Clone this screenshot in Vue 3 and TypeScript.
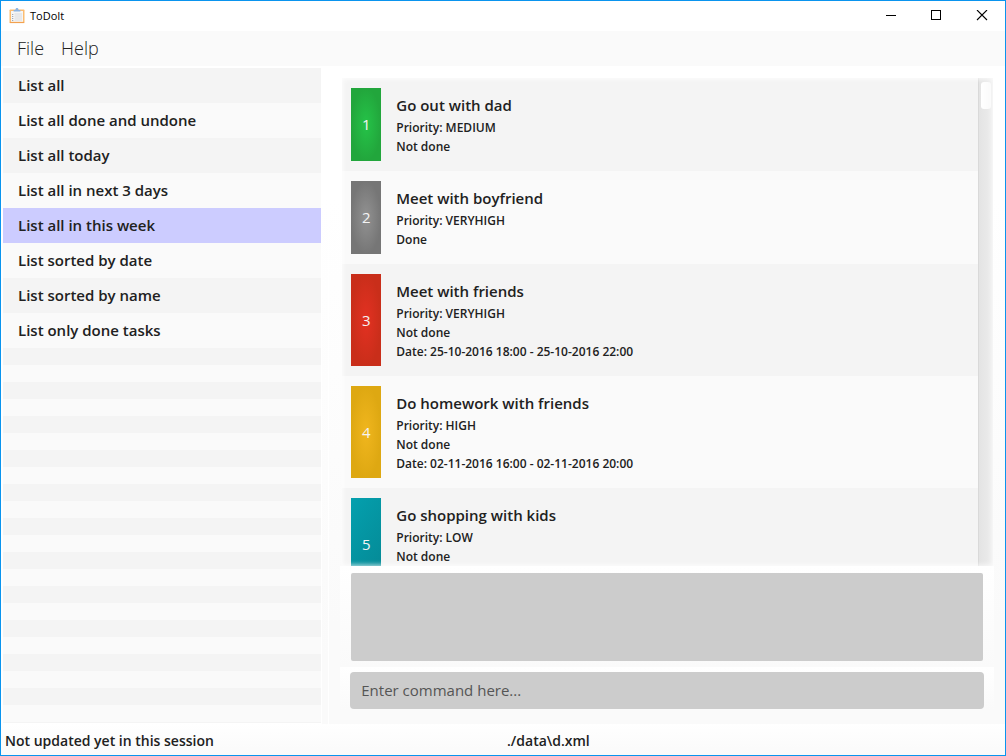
<script setup lang="ts">
import { ref } from 'vue'

interface Task {
  id: number
  name: string
  details: string[]
  tone: string
}

const filters: string[] = [
  'List all',
  'List all done and undone',
  'List all today',
  'List all in next 3 days',
  'List all in this week',
  'List sorted by date',
  'List sorted by name',
  'List only done tasks',
]

const tasks: Task[] = [
  { id: 1, name: 'Go out with dad', details: ['Priority: MEDIUM', 'Not done'], tone: 'green' },
  { id: 2, name: 'Meet with boyfriend', details: ['Priority: VERYHIGH', 'Done'], tone: 'gray' },
  { id: 3, name: 'Meet with friends', details: ['Priority: VERYHIGH', 'Not done', 'Date: 25-10-2016 18:00 - 25-10-2016 22:00'], tone: 'red' },
  { id: 4, name: 'Do homework with friends', details: ['Priority: HIGH', 'Not done', 'Date: 02-11-2016 16:00 - 02-11-2016 20:00'], tone: 'yellow' },
  { id: 5, name: 'Go shopping with kids', details: ['Priority: LOW', 'Not done', ''], tone: 'teal' },
]

const selected = ref(4)
const command = ref('')
</script>

<template>
  <div class="window">
    <header class="titlebar">
      <svg class="logo" width="16" height="16" viewBox="0 0 16 16" aria-hidden="true">
        <rect x="0.5" y="1.5" width="15" height="13.5" rx="0.8" fill="#fbbd72" />
        <path d="M0.8 14.6h14.4" stroke="#ef9a4a" stroke-width="0.9" />
        <rect x="2" y="3" width="12" height="10.8" fill="#f5f6f7" />
        <path d="M4.6 3.6V2H6.4C6.5 .6 7.1 0 8 0s1.5.6 1.6 2h1.8v1.6z" fill="#8db4e2" />
        <path d="M5.5 6H13M5.5 8H13M5.5 10H13M5.5 12H13" stroke="#d3d5d8" stroke-width="0.8" />
        <path d="M3 6.5h1.3M3 8.5h1.3M3 10.5h1.3M3 12.5h1.3" stroke="#a3a9b2" stroke-width="1" />
      </svg>
      <h1 class="title">ToDoIt</h1>
      <div class="controls">
        <button class="control" type="button" aria-label="Minimize">
          <svg width="12" height="12" viewBox="0 0 12 12" shape-rendering="crispEdges"><rect x="2" y="5" width="10" height="1" /></svg>
        </button>
        <button class="control" type="button" aria-label="Maximize">
          <svg width="12" height="12" viewBox="0 0 12 12" shape-rendering="crispEdges"><path d="M1 0h10v10H1zM2 1v8h8V1z" fill-rule="evenodd" /></svg>
        </button>
        <button class="control" type="button" aria-label="Close">
          <svg width="12" height="12" viewBox="0 0 12 12"><path d="M1 0l10 10M11 0L1 10" stroke="#000" stroke-width="1.1" fill="none" /></svg>
        </button>
      </div>
    </header>

    <nav class="menubar">
      <button class="menu" type="button">File</button>
      <button class="menu" type="button">Help</button>
    </nav>

    <main class="content">
      <aside class="sidebar">
        <button
          v-for="(label, i) in filters"
          :key="label"
          type="button"
          class="filter"
          :class="{ selected: i === selected }"
          @click="selected = i"
        >{{ label }}</button>
        <div class="stripes"></div>
      </aside>
      <div class="divider"></div>

      <section class="workspace">
        <div class="list-frame">
          <ul class="tasks">
            <li v-for="task in tasks" :key="task.id" class="task">
              <span class="badge" :class="task.tone">{{ task.id }}</span>
              <div class="info">
                <h2 class="name">{{ task.name }}</h2>
                <p v-for="(line, i) in task.details" :key="i" class="detail">{{ line }}</p>
              </div>
            </li>
          </ul>
          <div class="scrollbar"><div class="thumb"></div></div>
        </div>
        <div class="result-panel"><div class="result" role="status" aria-label="Command result"></div></div>
        <div class="command-panel">
          <input v-model="command" class="command" type="text" placeholder="Enter command here..." aria-label="Command" />
        </div>
      </section>
    </main>

    <footer class="statusbar">
      <span>Not updated yet in this session</span>
      <span>./data\d.xml</span>
    </footer>
  </div>
</template>

<style>
html, body, #app { height: 100%; }
body { margin: 0; }
</style>

<style scoped>
.window {
  box-sizing: border-box;
  display: flex;
  flex-direction: column;
  height: 100vh;
  border: 1px solid #0a94ee;
  background: #fff;
  color: #212121;
  font-family: "Open Sans", "Noto Sans", sans-serif;
  font-weight: 600;
  overflow: hidden;
}
h1, h2, p, ul { margin: 0; padding: 0; }
button { font-family: inherit; color: inherit; border: 0; background: none; padding: 0; }

.titlebar {
  display: flex;
  align-items: center;
  height: 30px;
  padding-left: 8px;
}
.title {
  margin-left: 5px;
  padding-bottom: 2px;
  color: #000;
  font-size: 11px;
  font-weight: 400;
}
.controls { display: flex; align-self: stretch; margin-left: auto; }
.control {
  display: flex;
  align-items: center;
  justify-content: center;
  width: 46px;
}

.menubar {
  box-sizing: border-box;
  display: flex;
  align-items: center;
  gap: 17px;
  height: 35px;
  padding: 0 0 2px 16px;
  background: #fafafa;
}
.menu { font-size: 18px; font-weight: 300; line-height: 24px; }

.content {
  display: flex;
  flex: 1;
  min-height: 0;
  padding-top: 2px;
  background: linear-gradient(#fff, #fff 20%, #fafafa 85%);
}
.sidebar {
  display: flex;
  flex-direction: column;
  flex: 0 0 32%;
  box-sizing: border-box;
  padding: 0 1px 1px 2px;
  background: #fff;
}
.filter {
  flex: none;
  height: 35px;
  padding: 0 0 2px 15px;
  background: #fafafa;
  font-size: 15px;
  font-weight: 600;
  text-align: left;
}
.filter:nth-child(odd) { background: #f4f4f4; }
.filter.selected { background: #ccccff; }
.stripes {
  flex: 1;
  background: repeating-linear-gradient(#f4f4f4 0 17px, #fafafa 17px 34px);
}
.divider {
  flex: none;
  width: 6px;
  border-right: 1px solid #fff;
  background: linear-gradient(#fff, #fff 20%, #fafafa 90%);
}

.workspace {
  display: flex;
  flex: 1;
  flex-direction: column;
  min-width: 0;
  padding: 10px 11px 15px;
}
.list-frame {
  position: relative;
  display: flex;
  flex: 1;
  min-height: 0;
  margin: 0 1px 0 2px;
  overflow: hidden;
  background: #f4f4f4;
}
.list-frame::after {
  content: "";
  position: absolute;
  inset: 0;
  box-shadow: inset 0 0 5px 1px rgba(255, 255, 255, 0.8);
  pointer-events: none;
}
.tasks { flex: 1; min-width: 0; list-style: none; }
.task {
  display: flex;
  padding: 10px 9px;
  background: #f4f4f4;
}
.task:nth-child(even) { background: #fafafa; }
.badge {
  box-sizing: border-box;
  display: flex;
  align-items: center;
  justify-content: center;
  width: 30px;
  margin-right: 15px;
  padding-bottom: 1px;
  color: #f4f4f4;
  font-size: 15px;
  font-weight: 400;
}
.green { background: radial-gradient(ellipse 50% 50%, #25c348, #22a63c); }
.gray { background: radial-gradient(ellipse 50% 50%, #929292, #767676); }
.red { background: radial-gradient(ellipse 50% 50%, #e33122, #c92e1a); }
.yellow { background: radial-gradient(ellipse 50% 50%, #f0b61e, #dea812); }
.teal { background: linear-gradient(125deg, #04a0ae, #058692); }
.info { padding: 5px 0; }
.name { font-size: 15px; font-weight: 600; line-height: 25px; }
.detail { height: 19px; font-size: 12px; line-height: 19px; }
.scrollbar {
  flex: none;
  box-sizing: border-box;
  width: 15px;
  padding: 4px 2px 0 3px;
  background: linear-gradient(90deg, #d4d4d4, #e4e4e4 10%, #ededed);
}
.thumb {
  height: 27px;
  border-radius: 3px;
  background: linear-gradient(90deg, #fff, #fafafa);
}
.result-panel { padding: 7px 11px 6px; background: linear-gradient(#fff, #fafafa); }
.result { height: 88px; border-radius: 2px; background: #ccc; }
.command-panel { padding: 5px 10px 0; background: linear-gradient(#fff, #fafafa); }
.command {
  display: block;
  box-sizing: border-box;
  width: 100%;
  height: 37px;
  padding: 0 11px 2px;
  border: 0;
  border-radius: 4px;
  background: #ccc;
  color: #212121;
  font: 400 15px "Open Sans", "Noto Sans", sans-serif;
}
.command::placeholder { color: #555; opacity: 1; }

.statusbar {
  box-sizing: border-box;
  display: grid;
  grid-template-columns: 1fr 1fr;
  align-items: center;
  column-gap: 4px;
  height: 31px;
  padding: 2px 0 0 4px;
  background: linear-gradient(#fff, #fafafa);
  font-size: 14px;
}
</style>
